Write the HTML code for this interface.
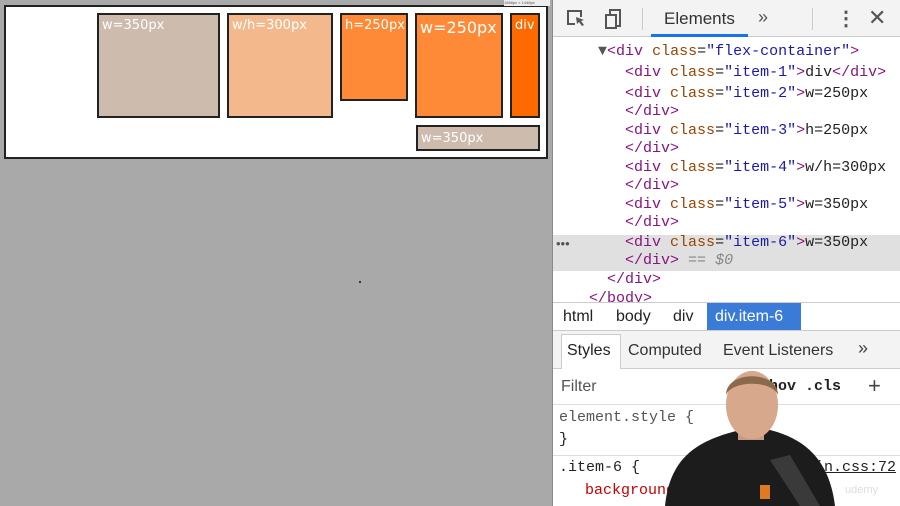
<!DOCTYPE html>
<html><head><style>
*{margin:0;padding:0;box-sizing:border-box}
body{width:900px;height:506px;overflow:hidden;background:#a9a9a9;position:relative;font-family:"Liberation Sans",sans-serif}
.a{position:absolute}
.it{position:absolute;border:2px solid #222;color:#fff;font-size:13px;padding:3px 3px;font-family:"DejaVu Sans",sans-serif}
.m{font-family:"Liberation Mono","DejaVu Sans Mono",monospace;font-size:15px;white-space:pre;position:absolute;left:0;color:#222}
.t{color:#881280}.n{color:#994500}.v{color:#1a1aa6}
</style></head><body>
<div class="a" style="left:4px;top:5px;width:544px;height:154px;background:#fff;border:2px solid #222"></div>
<div class="a" style="left:504px;top:0;width:46px;height:6px;background:#eee;font-size:4px;color:#555">1568px × 1448px</div>
<div class="it" style="left:97px;top:13px;width:123px;height:105px;background:#cdbbad">w=350px</div>
<div class="it" style="left:227px;top:13px;width:106px;height:105px;background:#f4b88d">w/h=300px</div>
<div class="it" style="left:340px;top:13px;width:68px;height:88px;background:#fe8a37">h=250px</div>
<div class="it" style="left:415px;top:13px;width:88px;height:105px;background:#fe8a37;font-size:16px">w=250px</div>
<div class="it" style="left:510px;top:13px;width:30px;height:105px;background:#ff6a00">div</div>
<div class="it" style="left:416px;top:125px;width:124px;height:26px;background:#cdbbad;padding-top:4px">w=350px</div>
<div class="a" style="left:359px;top:281px;width:2px;height:2px;background:#333"></div>

<div class="a" style="left:552px;top:0;width:348px;height:506px;background:#fff;border-left:1px solid #888">
 <div class="a" style="left:0;top:0;width:348px;height:37px;background:#f3f3f3;border-bottom:1px solid #ccc"></div>
 <svg class="a" style="left:12px;top:8px" width="60" height="22"><path d="M10 16H3V3h13v6" fill="none" stroke="#555" stroke-width="2"/><path d="M11 9l8 3-3 1 3 4-2 1-3-4-2 2z" fill="#555"/><rect x="41" y="7" width="10" height="13" fill="none" stroke="#555" stroke-width="2"/><path d="M45 7V2h10v16h-4" fill="none" stroke="#555" stroke-width="2"/></svg>
 <div class="a" style="left:89px;top:8px;width:1px;height:22px;background:#ccc"></div>
 <div class="a" style="left:111px;top:9px;font-size:17px;color:#333">Elements</div>
 <div class="a" style="left:205px;top:7px;font-size:18px;color:#555">»</div>
 <div class="a" style="left:98px;top:34px;width:97px;height:3px;background:#1a73e8"></div>
 <div class="a" style="left:259px;top:8px;width:1px;height:22px;background:#ccc"></div>
 <div class="a" style="left:283px;top:6px;font-size:20px;color:#555;font-weight:bold">⋮</div>
 <div class="a" style="left:315px;top:5px;font-size:22px;color:#555">✕</div>
 <div class="a" style="left:0;top:235px;width:348px;height:36px;background:#e0e0e0"></div>
 <div class="a" style="left:3px;top:236px;font-size:13px;color:#555">•••</div>
 <div class="a" style="left:0;top:42px;width:348px;height:260px;overflow:hidden">
 <div class="m" style="top:1px">     <span style="color:#555">▼</span><span class="t">&lt;div</span> <span class="n">class</span>=<span class="v">"flex-container"</span><span class="t">&gt;</span></div>
 <div class="m" style="top:22px">        <span class="t">&lt;div</span> <span class="n">class</span>=<span class="v">"item-1"</span><span class="t">&gt;</span>div<span class="t">&lt;/div&gt;</span></div>
 <div class="m" style="top:43px">        <span class="t">&lt;div</span> <span class="n">class</span>=<span class="v">"item-2"</span><span class="t">&gt;</span>w=250px</div>
 <div class="m" style="top:61px">        <span class="t">&lt;/div&gt;</span></div>
 <div class="m" style="top:80px">        <span class="t">&lt;div</span> <span class="n">class</span>=<span class="v">"item-3"</span><span class="t">&gt;</span>h=250px</div>
 <div class="m" style="top:98px">        <span class="t">&lt;/div&gt;</span></div>
 <div class="m" style="top:117px">        <span class="t">&lt;div</span> <span class="n">class</span>=<span class="v">"item-4"</span><span class="t">&gt;</span>w/h=300px</div>
 <div class="m" style="top:135px">        <span class="t">&lt;/div&gt;</span></div>
 <div class="m" style="top:154px">        <span class="t">&lt;div</span> <span class="n">class</span>=<span class="v">"item-5"</span><span class="t">&gt;</span>w=350px</div>
 <div class="m" style="top:172px">        <span class="t">&lt;/div&gt;</span></div>
 <div class="m" style="top:192px">        <span class="t">&lt;div</span> <span class="n">class</span>=<span class="v">"item-6"</span><span class="t">&gt;</span>w=350px</div>
 <div class="m" style="top:210px">        <span class="t">&lt;/div&gt;</span> <span style="color:#888">== <i>$0</i></span></div>
 <div class="m" style="top:229px">      <span class="t">&lt;/div&gt;</span></div>
 <div class="m" style="top:248px">    <span class="t">&lt;/body&gt;</span></div>
 </div>
 <div class="a" style="left:0;top:302px;width:348px;height:29px;background:#fff;border-top:1px solid #ccc;border-bottom:1px solid #ccc"></div>
 <div class="a" style="left:10px;top:308px;font-size:16px;color:#222">html</div>
 <div class="a" style="left:63px;top:308px;font-size:16px;color:#222">body</div>
 <div class="a" style="left:120px;top:308px;font-size:16px;color:#222">div</div>
 <div class="a" style="left:154px;top:303px;width:94px;height:27px;background:#3b7bd8"></div>
 <div class="a" style="left:162px;top:308px;font-size:16px;color:#fff">div.item-6</div>
 <div class="a" style="left:0;top:331px;width:348px;height:38px;background:#f3f3f3;border-bottom:1px solid #ccc"></div>
 <div class="a" style="left:8px;top:334px;width:60px;height:35px;background:#fff;border:1px solid #ccc;border-bottom:none"></div>
 <div class="a" style="left:14px;top:342px;font-size:16px;color:#222">Styles</div>
 <div class="a" style="left:75px;top:342px;font-size:16px;color:#333">Computed</div>
 <div class="a" style="left:170px;top:342px;font-size:16px;color:#333">Event Listeners</div>
 <div class="a" style="left:305px;top:338px;font-size:18px;color:#444">»</div>
 <div class="a" style="left:8px;top:378px;font-size:16px;color:#555">Filter</div>
 <div class="a" style="left:216px;top:378px;font-size:15px;color:#222;font-weight:bold;font-family:'Liberation Mono',monospace">hov  .cls</div>
 <div class="a" style="left:315px;top:373px;font-size:22px;color:#444">+</div>
 <div class="a" style="left:0;top:404px;width:348px;height:1px;background:#ddd"></div>
 <div class="m" style="left:6px;top:409px;color:#555">element.style {</div>
 <div class="m" style="left:6px;top:431px">}</div>
 <div class="a" style="left:0;top:455px;width:348px;height:1px;background:#ddd"></div>
 <div class="m" style="left:6px;top:459px">.item-6 {</div>
 <div class="m" style="left:262px;top:459px;text-decoration:underline">in.css:72</div>
 <div class="m" style="left:32px;top:482px;color:#c80000">background</div>
</div>
<svg class="a" style="left:660px;top:365px" width="180" height="141">
 <path d="M5 141 C10 90 40 75 80 65 L110 65 C150 75 170 100 175 141Z" fill="#1c1c1c"/>
 <rect x="78" y="50" width="26" height="25" fill="#c89a80"/>
 <ellipse cx="92" cy="40" rx="26" ry="34" fill="#d7a88c"/>
 <path d="M66 30 C66 5 118 5 118 30 C112 15 72 15 66 30Z" fill="#8a6a4c"/>
 <path d="M110 95 L130 90 L160 141 L140 141Z" fill="#3a3a3a"/>
 <rect x="100" y="120" width="10" height="14" fill="#e07a20"/>
</svg>
<div class="a" style="left:845px;top:484px;font-size:11px;color:#ddd">udemy</div>
</body></html>
